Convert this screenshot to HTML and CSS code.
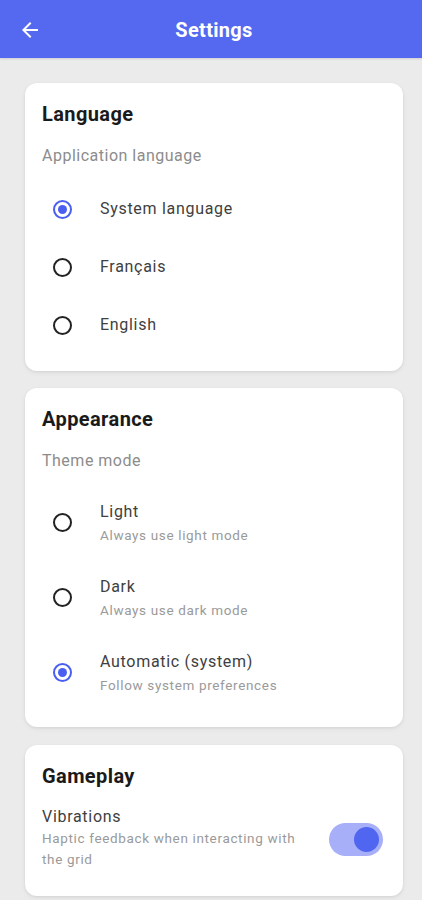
FILE: index.html
```html
<!DOCTYPE html>
<html lang="en">
<head>
<meta charset="utf-8">
<title>Settings</title>
<link rel="stylesheet" href="styles.css">
</head>
<body>
<header class="topbar">
  <button class="back" aria-label="Back">
    <svg width="24" height="24" viewBox="0 0 24 24"><path d="M20 11H7.83l5.59-5.59L12 4l-8 8 8 8 1.41-1.41L7.83 13H20v-2z" fill="#fff"/></svg>
  </button>
  <h1 class="title">Settings</h1>
</header>
<main class="content">
  <section class="card">
    <h2 class="card-title">Language</h2>
    <p class="card-sub">Application language</p>
    <div class="options">
      <div class="option"><span class="radio on"></span><span class="opt-label">System language</span></div>
      <div class="option"><span class="radio"></span><span class="opt-label">Français</span></div>
      <div class="option"><span class="radio"></span><span class="opt-label">English</span></div>
    </div>
  </section>
  <section class="card">
    <h2 class="card-title">Appearance</h2>
    <p class="card-sub">Theme mode</p>
    <div class="options">
      <div class="option tall"><span class="radio"></span><div class="opt-text"><span class="opt-label">Light</span><span class="opt-desc">Always use light mode</span></div></div>
      <div class="option tall"><span class="radio"></span><div class="opt-text"><span class="opt-label">Dark</span><span class="opt-desc">Always use dark mode</span></div></div>
      <div class="option tall"><span class="radio on"></span><div class="opt-text"><span class="opt-label">Automatic (system)</span><span class="opt-desc">Follow system preferences</span></div></div>
    </div>
  </section>
  <section class="card last">
    <h2 class="card-title">Gameplay</h2>
    <div class="setting">
      <div class="setting-text">
        <span class="setting-label">Vibrations</span>
        <span class="setting-desc">Haptic feedback when interacting with the grid</span>
      </div>
      <span class="switch"><span class="thumb"></span></span>
    </div>
  </section>
</main>
</body>
</html>
```
FILE: styles.css
```css
* { box-sizing: border-box; }
html, body { margin: 0; padding: 0; }
body {
  background: #ebebeb;
  font-family: Roboto, "Noto Sans", "Liberation Sans", sans-serif;
  color: #1c1c1c;
  width: 422px;
  min-height: 900px;
}
.topbar {
  height: 58px;
  background: #5468f0;
  display: flex;
  align-items: center;
  justify-content: center;
  position: relative;
  box-shadow: 0 1px 2px rgba(0,0,0,0.12);
}
.back {
  position: absolute;
  left: 18px;
  top: 18px;
  width: 24px;
  height: 24px;
  padding: 0;
  border: 0;
  background: none;
  display: flex;
}
.title {
  margin: 0;
  color: #fff;
  font-size: 20px;
  font-weight: 700;
  letter-spacing: 0.3px;
  line-height: 24px;
  margin-top: 1px;
  margin-left: 6px;
}
.content {
  padding: 25px 19px 0 25px;
  display: flex;
  flex-direction: column;
  gap: 17px;
}
.card {
  background: #fff;
  border-radius: 12px;
  padding: 19px 17px 17px;
  box-shadow: 0 1px 3px rgba(0,0,0,0.08), 0 2px 6px rgba(0,0,0,0.04);
}
.card.last { padding-bottom: 26px; margin-top: 1px; }
.card-title {
  margin: 0;
  font-size: 20px;
  font-weight: 700;
  letter-spacing: 0.4px;
  line-height: 24px;
  color: #1a1a1a;
}
.card-sub {
  margin: 20px 0 0;
  font-size: 16px;
  letter-spacing: 0.5px;
  line-height: 20px;
  color: #8c8c8c;
}
.options {
  margin-top: 14px;
  display: flex;
  flex-direction: column;
}
.option {
  height: 58px;
  display: flex;
  align-items: center;
  gap: 28px;
  padding-left: 11px;
}
.option.tall { height: 75px; }
.radio {
  width: 19px;
  height: 19px;
  border: 2px solid #222;
  border-radius: 50%;
  flex: none;
  display: flex;
  align-items: center;
  justify-content: center;
}
.radio.on { border-color: #4a5ff0; }
.radio.on::after {
  content: "";
  width: 9px;
  height: 9px;
  border-radius: 50%;
  background: #4a5ff0;
}
.opt-label {
  font-size: 16px;
  letter-spacing: 0.7px;
  line-height: 22px;
  color: #404040;
}
.opt-text {
  display: flex;
  flex-direction: column;
}
.opt-desc {
  font-size: 13.5px;
  letter-spacing: 0.65px;
  line-height: 20px;
  color: #9a9a9a;
  margin-top: 2px;
}
.setting {
  margin-top: 18px;
  display: flex;
  align-items: center;
  justify-content: space-between;
}
.setting-text {
  display: flex;
  flex-direction: column;
  width: 270px;
}
.setting-label {
  font-size: 16px;
  letter-spacing: 0.7px;
  line-height: 22px;
  color: #404040;
}
.setting-desc {
  font-size: 13.5px;
  letter-spacing: 0.65px;
  line-height: 21px;
  color: #9a9a9a;
}
.switch {
  width: 54px;
  height: 33px;
  border-radius: 17px;
  background: #a6aff7;
  display: flex;
  align-items: center;
  justify-content: flex-end;
  padding-right: 4px;
  margin-right: 3px;
  margin-top: 2px;
}
.thumb {
  width: 25px;
  height: 25px;
  border-radius: 50%;
  background: #5066f0;
}
```
